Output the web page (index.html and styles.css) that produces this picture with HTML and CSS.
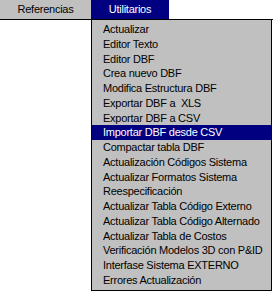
FILE: index.html
```html
<!DOCTYPE html>
<html lang="es">
<head>
    <meta charset="UTF-8">
    <title>Utilitarios</title>
    <link rel="stylesheet" href="styles.css">
</head>
<body>
    <div class="menubar">
        <div class="menu-title">Referencias</div>
        <div class="menu-title active">Utilitarios</div>
    </div>

    <ul class="dropdown">
        <li>Actualizar</li>
        <li>Editor Texto</li>
        <li>Editor DBF</li>
        <li>Crea nuevo DBF</li>
        <li>Modifica Estructura DBF</li>
        <li>Exportar DBF a&nbsp; XLS</li>
        <li>Exportar DBF a CSV</li>
        <li class="selected">Importar DBF desde CSV</li>
        <li>Compactar tabla DBF</li>
        <li>Actualización Códigos Sistema</li>
        <li>Actualizar Formatos Sistema</li>
        <li>Reespecificación</li>
        <li>Actualizar Tabla Código Externo</li>
        <li>Actualizar Tabla Código Alternado</li>
        <li>Actualizar Tabla de Costos</li>
        <li>Verificación Modelos 3D con P&amp;ID</li>
        <li>Interfase Sistema EXTERNO</li>
        <li>Errores Actualización</li>
    </ul>
</body>
</html>
```

FILE: styles.css
```css
body {
    margin: 0;
    background: #fff;
    font-family: "Liberation Sans", Arial, sans-serif;
    font-size: 11px;
    letter-spacing: -0.25px;
    color: #000;
}
.menubar {
    display: flex;
    height: 19px;
    border-bottom: 1px solid #000;
}
.menu-title {
    width: 91px;
    line-height: 19px;
    text-align: center;
    background: #c0c0c0;
}
.menu-title.active {
    width: 78px;
    background: #000080;
    color: #fff;
}
.dropdown {
    list-style: none;
    margin: 0 0 0 91px;
    padding: 2px 0 0;
    width: 179px;
    height: 268px;
    background: #c0c0c0;
    border: 1px solid #000;
    border-top: none;
}
.dropdown li {
    height: 14.76px;
    line-height: 14.76px;
    padding-left: 11px;
    white-space: nowrap;
}
.dropdown li.selected {
    background: #000080;
    color: #fff;
}
```
